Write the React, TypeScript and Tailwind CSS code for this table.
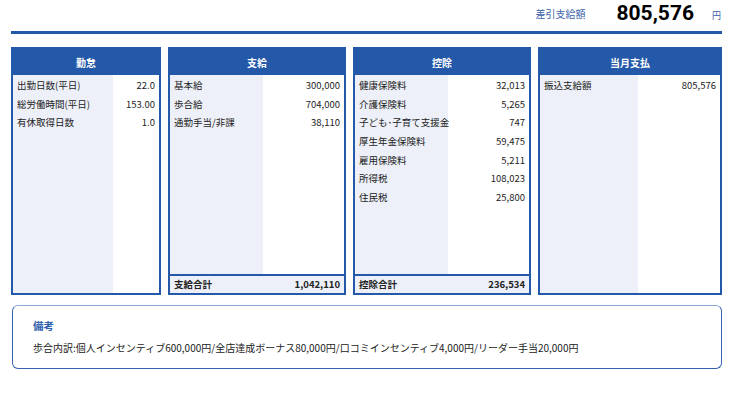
type Row = { label: string; value: string };

type Panel = {
  title: string;
  width: string;
  labelWidth: string;
  rows: Row[];
  total?: Row;
};

const panels: Panel[] = [
  {
    title: "勤怠",
    width: "w-[150px]",
    labelWidth: "w-[100px]",
    rows: [
      { label: "出勤日数(平日)", value: "22.0" },
      { label: "総労働時間(平日)", value: "153.00" },
      { label: "有休取得日数", value: "1.0" },
    ],
  },
  {
    title: "支給",
    width: "w-[178px]",
    labelWidth: "w-[93px]",
    rows: [
      { label: "基本給", value: "300,000" },
      { label: "歩合給", value: "704,000" },
      { label: "通勤手当/非課", value: "38,110" },
    ],
    total: { label: "支給合計", value: "1,042,110" },
  },
  {
    title: "控除",
    width: "w-[178px]",
    labelWidth: "w-[93px]",
    rows: [
      { label: "健康保険料", value: "32,013" },
      { label: "介護保険料", value: "5,265" },
      { label: "子ども･子育て支援金", value: "747" },
      { label: "厚生年金保険料", value: "59,475" },
      { label: "雇用保険料", value: "5,211" },
      { label: "所得税", value: "108,023" },
      { label: "住民税", value: "25,800" },
    ],
    total: { label: "控除合計", value: "236,534" },
  },
  {
    title: "当月支払",
    width: "flex-1",
    labelWidth: "w-[98px]",
    rows: [{ label: "振込支給額", value: "805,576" }],
  },
];

const PayPanel = ({ panel }: { panel: Panel }) => (
  <div className={`${panel.width} flex flex-col border-2 border-[#2458a8]`}>
    <div className="flex h-[26px] items-center justify-center bg-[#2458a8] text-[10px] font-bold text-white">
      {panel.title}
    </div>
    <div className="flex flex-1">
      <div className={`${panel.labelWidth} bg-[#edf0f8] pt-px pl-[4px]`}>
        {panel.rows.map((row) => (
          <div key={row.label} className="h-[18.67px] leading-[18.67px] whitespace-nowrap text-[9.5px] text-[#222]">
            {row.label}
          </div>
        ))}
      </div>
      <div className="flex-1 pt-px pr-[4px] text-right">
        {panel.rows.map((row) => (
          <div key={row.label} className="h-[18.67px] leading-[18.67px] text-[9.5px] text-[#222]">
            {row.value}
          </div>
        ))}
      </div>
    </div>
    {panel.total && (
      <div className="flex h-[19px] items-center justify-between border-t-2 border-[#2458a8] bg-[#edf0f8] px-[4px] text-[9.5px] font-bold text-[#222]">
        <span>{panel.total.label}</span>
        <span>{panel.total.value}</span>
      </div>
    )}
  </div>
);

export default function App() {
  return (
    <div className="h-[396px] w-[740px] bg-white font-['Noto_Sans_CJK_JP','Noto_Sans',sans-serif]">
      <div className="ml-[11px] w-[711px]">
        <div className="flex h-[31px] items-center justify-end">
          <span className="mt-[-5px] text-[10px] text-[#3a5ea8]">差引支給額</span>
          <span className="ml-[31px] mt-[-5px] font-['Roboto',sans-serif] text-[21px] leading-[26px] font-bold text-black">
            805,576
          </span>
          <span className="ml-[18px] mr-px text-[9px] text-[#3a5ea8]">円</span>
        </div>
        <div className="h-[3px] bg-[#2458a8]" />

        <div className="mt-[13px] flex h-[248px] gap-[7px]">
          {panels.map((panel) => (
            <PayPanel key={panel.title} panel={panel} />
          ))}
        </div>

        <div className="mt-[10px] ml-px h-[64px] rounded-[6px] border border-[#3563b0] border-t-[#8ea8d8] px-[20px] pt-[12px]">
          <div className="text-[10.5px] font-bold text-[#2f5fae]">備考</div>
          <div className="mt-[6px] whitespace-nowrap text-[10px] text-[#222]">
            歩合内訳:個人インセンティブ600,000円/全店達成ボーナス80,000円/口コミインセンティブ4,000円/リーダー手当20,000円
          </div>
        </div>
      </div>
    </div>
  );
}
